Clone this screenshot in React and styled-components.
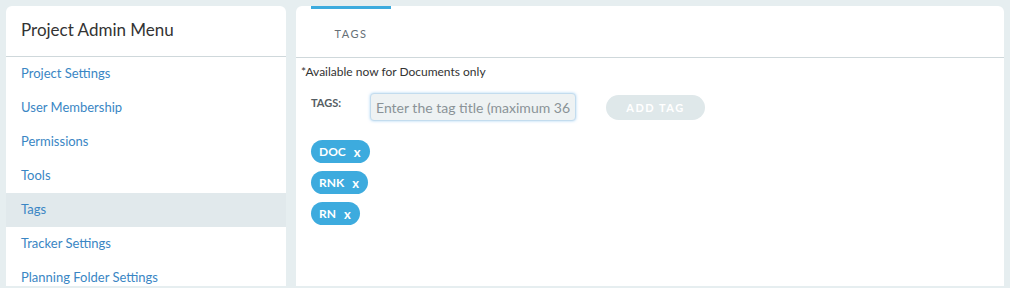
import React, { useState } from 'react';
import styled, { createGlobalStyle } from 'styled-components';

const GlobalStyle = createGlobalStyle`
  html, body {
    margin: 0;
    padding: 0;
    background: #e6eef0;
    font-family: Lato, "Liberation Sans", sans-serif;
  }
`;

const Page = styled.div`
  display: flex;
  gap: 10px;
  padding: 6px 6px 2px 6px;
  height: 288px;
  box-sizing: border-box;
  overflow: hidden;
`;

const SideCard = styled.div`
  width: 280px;
  flex-shrink: 0;
  background: #fff;
  border-radius: 6px 6px 0 0;
  overflow: hidden;
`;

const SideTitle = styled.div`
  height: 51px;
  display: flex;
  align-items: center;
  padding: 0 0 4px 15px;
  box-sizing: border-box;
  font-size: 17px;
  color: #333;
  border-bottom: 1px solid #cfd8db;
`;

const MenuItem = styled.div`
  height: 34px;
  display: flex;
  align-items: center;
  padding: 0 0 2px 15px;
  box-sizing: border-box;
  font-size: 13px;
  color: #3a86c4;
  cursor: pointer;
  background: ${({ active }) => (active ? '#e1e9ec' : 'transparent')};
`;

const MainCard = styled.div`
  flex: 1;
  background: #fff;
  border-radius: 6px 6px 0 0;
  overflow: hidden;
`;

const TabBar = styled.div`
  display: flex;
  padding-left: 15px;
  height: 51px;
  border-bottom: 1px solid #cfd8db;
`;

const Tab = styled.div`
  width: 80px;
  display: flex;
  align-items: center;
  justify-content: center;
  font-size: 11px;
  letter-spacing: 1.5px;
  color: #666f76;
  border-top: 3px solid ${({ active }) => (active ? '#3dabde' : 'transparent')};
  box-sizing: border-box;
`;

const Note = styled.div`
  padding: 6px 5px 0 5px;
  font-size: 12px;
  color: #333;
`;

const FormRow = styled.div`
  display: flex;
  align-items: center;
  padding: 14px 0 0 15px;
`;

const Label = styled.div`
  width: 59px;
  font-size: 11px;
  font-weight: 700;
  color: #555d63;
  align-self: flex-start;
  padding-top: 3px;
`;

const Input = styled.input`
  width: 206px;
  height: 28px;
  box-sizing: border-box;
  background: #eef2f3;
  border: 1px solid #c3dcee;
  border-radius: 4px;
  box-shadow: 0 0 3px rgba(102, 175, 233, 0.55);
  padding: 0 5px;
  font-family: inherit;
  font-size: 14px;
  color: #333;
  outline: none;
  &::placeholder {
    color: #8a9297;
  }
`;

const AddButton = styled.button`
  margin-left: 30px;
  width: 99px;
  height: 25px;
  border: none;
  border-radius: 13px;
  background: #dfe8ea;
  color: #fff;
  font-family: inherit;
  font-size: 11px;
  font-weight: 700;
  letter-spacing: 1.5px;
  cursor: pointer;
`;

const TagList = styled.div`
  display: flex;
  flex-direction: column;
  align-items: flex-start;
  gap: 8px;
  padding: 19px 0 0 15px;
`;

const TagPill = styled.div`
  height: 23px;
  display: flex;
  align-items: center;
  gap: 8px;
  padding: 0 9px 0 8px;
  border-radius: 12px;
  background: #3dabde;
  color: #fff;
  font-size: 12px;
  font-weight: 700;
`;

const Remove = styled.span`
  font-size: 13px;
  cursor: pointer;
`;

const menu = [
  'Project Settings',
  'User Membership',
  'Permissions',
  'Tools',
  'Tags',
  'Tracker Settings',
  'Planning Folder Settings',
];

export default function App() {
  const [tags, setTags] = useState(['DOC', 'RNK', 'RN']);
  const [active, setActive] = useState('Tags');

  return (
    <>
      <GlobalStyle />
      <Page>
        <SideCard>
          <SideTitle>Project Admin Menu</SideTitle>
          {menu.map(item => (
            <MenuItem
              key={item}
              active={active === item}
              onClick={() => setActive(item)}
            >
              {item}
            </MenuItem>
          ))}
        </SideCard>
        <MainCard>
          <TabBar>
            <Tab active>TAGS</Tab>
          </TabBar>
          <Note>*Available now for Documents only</Note>
          <FormRow>
            <Label>TAGS:</Label>
            <Input placeholder="Enter the tag title (maximum 36 characters)" />
            <AddButton>ADD TAG</AddButton>
          </FormRow>
          <TagList>
            {tags.map(tag => (
              <TagPill key={tag}>
                {tag}
                <Remove onClick={() => setTags(tags.filter(t => t !== tag))}>x</Remove>
              </TagPill>
            ))}
          </TagList>
        </MainCard>
      </Page>
    </>
  );
}
